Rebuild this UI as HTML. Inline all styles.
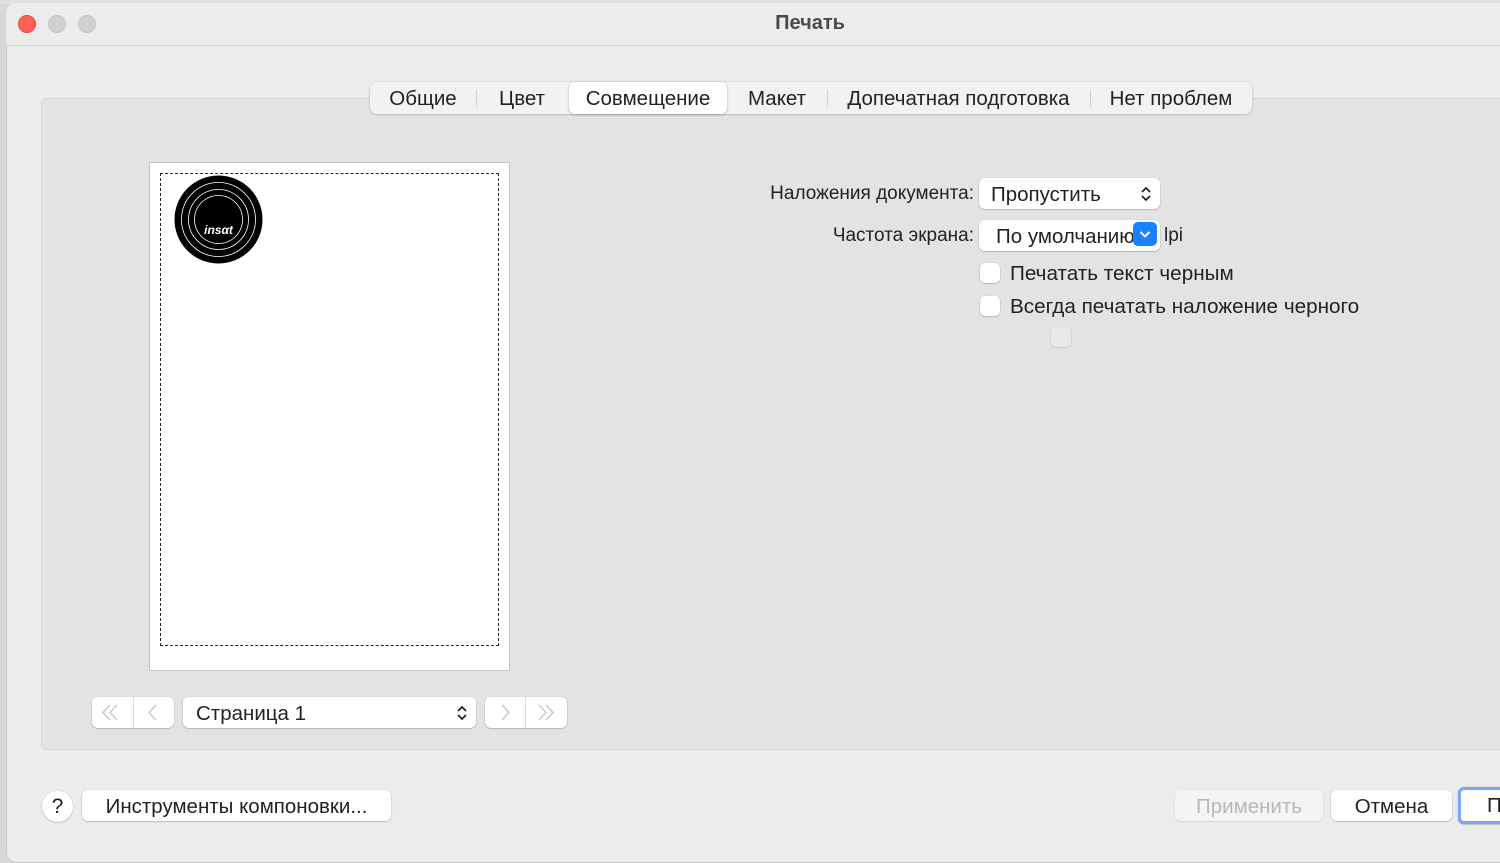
<!DOCTYPE html>
<html><head><meta charset="utf-8"><style>
*{box-sizing:border-box;margin:0;padding:0}
body{width:1500px;height:851px;overflow:hidden;background:#d8d8d8;font-family:"Liberation Sans","DejaVu Sans",sans-serif;color:#222;position:relative}
.abs{position:absolute}
.win{left:6px;top:3px;width:1500px;height:860px;background:#ececec;border-radius:10px 0 0 10px;border:1px solid #c8c8c8}
.title{left:6px;top:3px;width:1494px;height:43px;border-bottom:1px solid #d2d2d2;background:#ececec;border-radius:10px 0 0 0}
.dot{width:18px;height:18px;border-radius:50%;top:15px;background:#d0d0d0;border:1px solid #c4c4c4}
.panel{left:41px;top:98px;width:1470px;height:652px;background:#e3e3e3;border:1px solid #d6d6d6;border-radius:5px}
.tabs{left:370px;top:82px;width:882px;height:32px;background:#f2f2f2;border-radius:7px;box-shadow:0 0.5px 2px rgba(0,0,0,.25);font-size:20.5px}
.tab{position:absolute;top:0;height:32px;line-height:34px;text-align:center}
.sep{position:absolute;top:8px;width:1px;height:17px;background:#d0d0d0}
.sel{background:#fff;border-radius:6px;box-shadow:0 0.5px 2px rgba(0,0,0,.3)}
.btn{background:#fff;border-radius:6px;box-shadow:0 0.5px 1.5px rgba(0,0,0,.35);font-size:20.5px;line-height:33px;white-space:nowrap}
.lbl{font-size:19px;text-align:right}
.cb{width:20px;height:20px;background:#fff;border-radius:5px;box-shadow:0 0.5px 1.5px rgba(0,0,0,.35)}
.t{font-size:20.7px}
</style></head><body>
<div class="abs" style="left:0;top:0;width:1500px;height:4px;background:#e0e0e0"></div>
<div class="abs win"></div>
<div class="abs title"></div>
<div class="abs dot" style="left:18px;background:#fe5f57;border-color:#e24b42"></div>
<div class="abs dot" style="left:48px"></div>
<div class="abs dot" style="left:78px"></div>
<div class="abs" style="left:0;top:12px;width:1620px;text-align:center;font-size:20px;font-weight:bold;color:#4a4a4a">Печать</div>
<div class="abs panel"></div>
<div class="abs tabs">
<div class="tab" style="left:0;width:106px">Общие</div>
<div class="sep" style="left:106px"></div>
<div class="tab" style="left:106px;width:92px">Цвет</div>
<div class="tab sel" style="left:199px;width:158px">Совмещение</div>
<div class="tab" style="left:357px;width:100px">Макет</div>
<div class="sep" style="left:457px"></div>
<div class="tab" style="left:457px;width:263px">Допечатная подготовка</div>
<div class="sep" style="left:720px"></div>
<div class="tab" style="left:720px;width:162px">Нет проблем</div>
</div>
<div class="abs" style="left:149px;top:162px;width:361px;height:509px;background:#fff;border:1px solid #c4c4c4"></div>
<div class="abs" style="left:160px;top:173px;width:339px;height:473px;border:1px dashed #222"></div>
<svg class="abs" style="left:174px;top:175px" width="89" height="89" viewBox="0 0 89 89">
<circle cx="44.5" cy="44.5" r="44" fill="#000"/>
<circle cx="44.5" cy="44.5" r="37" fill="none" stroke="#fff" stroke-width="0.8"/>
<circle cx="44.5" cy="44.5" r="30" fill="none" stroke="#fff" stroke-width="0.8"/>
<circle cx="44.5" cy="44.5" r="24" fill="none" stroke="#fff" stroke-width="0.8"/>
<text x="44.5" y="59" fill="#fff" font-size="12" font-weight="bold" font-style="italic" text-anchor="middle" font-family="Liberation Sans,sans-serif">insαt</text>
</svg>
<div class="abs btn" style="left:92px;top:697px;width:82px;height:31px"><svg class="abs" style="left:0;top:0" width="82" height="31"><path d="M18 8 L11 15.5 L18 23 M25 8 L18 15.5 L25 23" stroke="#c8c8c8" stroke-width="1.5" fill="none"/><line x1="41.5" y1="0" x2="41.5" y2="31" stroke="#ddd"/><path d="M64 8 L57 15.5 L64 23" stroke="#c8c8c8" stroke-width="1.5" fill="none"/></svg></div>
<div class="abs btn" style="left:183px;top:697px;width:293px;height:31px;padding-left:13px">Страница 1<svg class="abs" style="right:8px;top:7px" width="12" height="18"><path d="M2 7 L6 3 L10 7 M2 11 L6 15 L10 11" stroke="#222" stroke-width="1.8" fill="none"/></svg></div>
<div class="abs btn" style="left:485px;top:697px;width:82px;height:31px"><svg class="abs" style="left:0;top:0" width="82" height="31"><path d="M17 8 L24 15.5 L17 23" stroke="#c8c8c8" stroke-width="1.5" fill="none"/><line x1="40.5" y1="0" x2="40.5" y2="31" stroke="#ddd"/><path d="M54 8 L61 15.5 L54 23 M61 8 L68 15.5 L61 23" stroke="#c8c8c8" stroke-width="1.5" fill="none"/></svg></div>
<div class="abs lbl" style="left:700px;top:183px;width:274px">Наложения документа:</div>
<div class="abs btn" style="left:979px;top:178px;width:181px;height:31px;padding-left:12px">Пропустить<svg class="abs" style="right:8px;top:7px" width="12" height="18"><path d="M2 7 L6 3 L10 7 M2 11 L6 15 L10 11" stroke="#222" stroke-width="1.8" fill="none"/></svg></div>
<div class="abs lbl" style="left:700px;top:225px;width:274px">Частота экрана:</div>
<div class="abs btn" style="left:979px;top:220px;width:181px;height:31px;padding-left:17px;overflow:hidden">По умолчанию</div>
<div class="abs" style="left:1133px;top:222px;width:24px;height:24px;background:#1a82fb;border-radius:5px"><svg width="24" height="24"><path d="M7.5 10 L12 14.5 L16.5 10" stroke="#fff" stroke-width="2" fill="none"/></svg></div>
<div class="abs" style="left:1164px;top:225px;font-size:19px">lpi</div>
<div class="abs cb" style="left:980px;top:263px"></div>
<div class="abs t" style="left:1010px;top:262px">Печатать текст черным</div>
<div class="abs cb" style="left:980px;top:296px"></div>
<div class="abs t" style="left:1010px;top:295px">Всегда печатать наложение черного</div>
<div class="abs" style="left:1051px;top:327px;width:20px;height:20px;background:#e9e9e9;border-radius:5px;box-shadow:0 0.5px 1.5px rgba(0,0,0,.2)"></div>
<div class="abs" style="left:42px;top:791px;width:31px;height:31px;border-radius:50%;background:#fff;box-shadow:0 0.5px 1.5px rgba(0,0,0,.35);text-align:center;font-size:21px;line-height:32px">?</div>
<div class="abs btn" style="left:82px;top:790px;width:309px;height:31px;text-align:center">Инструменты компоновки...</div>
<div class="abs btn" style="left:1175px;top:790px;width:148px;height:31px;text-align:center;background:#f4f4f4;color:#b8b8b8;box-shadow:0 0.5px 1.5px rgba(0,0,0,.15)">Применить</div>
<div class="abs btn" style="left:1331px;top:790px;width:121px;height:31px;text-align:center">Отмена</div>
<div class="abs btn" style="left:1458px;top:787px;width:60px;height:37px;border:3px solid #7aa6f5;padding-left:26px;line-height:31px">П</div>
</body></html>
